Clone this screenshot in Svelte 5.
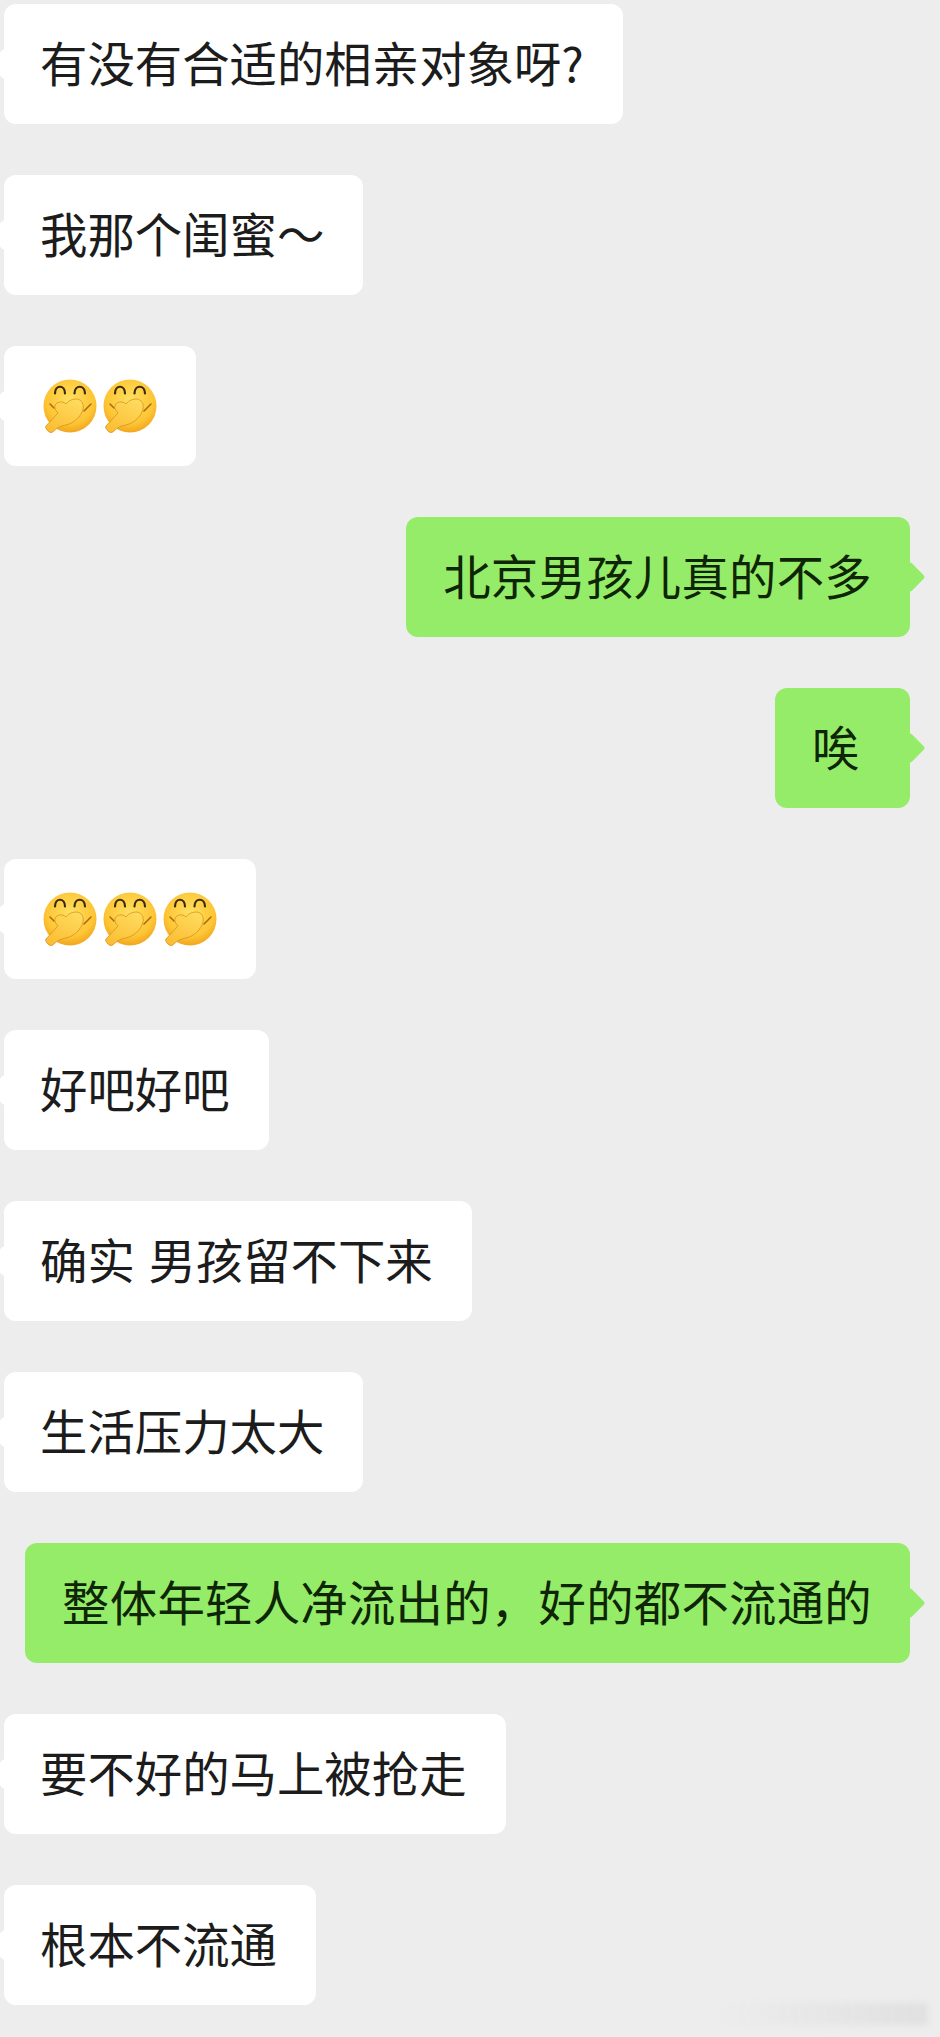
<script>
	const messages = [
		{ text: '有没有合适的相亲对象呀?' },
		{ text: '我那个闺蜜～' },
		{ emoji: 2 },
		{ text: '北京男孩儿真的不多', me: true },
		{ text: '唉', me: true },
		{ emoji: 3 },
		{ text: '好吧好吧' },
		{ text: '确实 男孩留不下来' },
		{ text: '生活压力太大' },
		{ text: '整体年轻人净流出的，好的都不流通的', me: true },
		{ text: '要不好的马上被抢走' },
		{ text: '根本不流通' }
	];
</script>

<div class="chat">
	{#each messages as msg}
		<div class="row" class:me={msg.me}>
			<div class="bubble" class:emoji-only={msg.emoji}>
				{#if msg.emoji}
					{#each Array(msg.emoji) as _}
						<svg class="emoji" viewBox="0 0 54 54">
							<defs>
								<radialGradient id="face" cx="50%" cy="38%" r="65%">
									<stop offset="0" stop-color="#ffe060" />
									<stop offset="0.7" stop-color="#fdc534" />
									<stop offset="1" stop-color="#f0a01c" />
								</radialGradient>
								<linearGradient id="hand" x1="0.8" y1="0" x2="0.2" y2="1">
									<stop offset="0" stop-color="#ffdb5e" />
									<stop offset="1" stop-color="#fbbd33" />
								</linearGradient>
							</defs>
							<circle cx="27" cy="27" r="26.5" fill="url(#face)" />
							<path d="M12 14.500c0-9 10-9 10 0M31.500 14.500c0-9 10.500-9 10.500 0" fill="none" stroke="#3d2a0e" stroke-width="2.200" stroke-linecap="round" />
							<path d="M7 25l4 4M48 25l-7 7" fill="none" stroke="#a8690e" stroke-width="1.500" stroke-linecap="round" />
							<path d="M3 47L15 34C11 30 11 26 14 24C17 22 21 23 23 25C26 21 30 20 34 20C39 21 41 25 40 30C38 38 31 44 23 46C18 47 15 48 11 52C9 54 7 54 5 52C3 50 2 48 3 47Z" fill="url(#hand)" stroke="#d8921c" stroke-width="0.800" stroke-linejoin="round" />
						</svg>
					{/each}
				{:else}
					<span class="label">{msg.text}</span>
				{/if}
			</div>
		</div>
	{/each}
</div>
<div class="mark"></div>

<style>
	:global(body) {
		background: #ededed;
		overflow: hidden;
	}

	.chat {
		display: flex;
		flex-direction: column;
		gap: 51px;
		height: 2037px;
		box-sizing: border-box;
		padding: 4px 30px 0 4px;
		font-family: "Noto Sans CJK SC", "Liberation Sans", sans-serif;
		font-size: 47.4px;
		font-weight: 400;
		color: #1c1c1c;
	}

	.row {
		display: flex;
		justify-content: flex-start;
	}

	.row.me {
		justify-content: flex-end;
	}

	.bubble {
		position: relative;
		display: flex;
		align-items: center;
		box-sizing: border-box;
		height: 120px;
		padding: 0 39px 0 36px;
		background: #fff;
		border-radius: 12px;
	}

	.label {
		white-space: pre;
		word-spacing: 3px;
		margin-top: -6px;
	}

	.bubble::before {
		content: "";
		position: absolute;
		left: -11px;
		top: 49px;
		width: 22px;
		height: 22px;
		background: inherit;
		border-radius: 3px;
		transform: rotate(45deg);
	}

	.me .bubble {
		min-width: 135px;
		padding: 0 38px 0 37px;
		background: #95ec69;
		color: #0e2606;
		letter-spacing: 0.25px;
	}

	.me .bubble::before {
		left: auto;
		right: -11px;
	}

	.emoji-only {
		padding: 0 36px;
	}

	.emoji {
		width: 54px;
		height: 54px;
		margin: 0 3px;
		filter: blur(0.4px);
	}

	.mark {
		position: absolute;
		left: 720px;
		top: 2003px;
		width: 208px;
		height: 22px;
		background: linear-gradient(90deg, rgba(226, 226, 226, 0), #e0e0e0);
		filter: blur(3px);
	}
</style>
